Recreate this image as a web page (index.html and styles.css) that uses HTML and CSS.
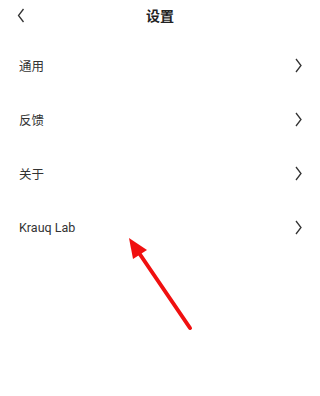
FILE: index.html
```html
<!DOCTYPE html>
<html>
<head>
<meta charset="utf-8">
<link rel="stylesheet" href="styles.css">
</head>
<body>
<div class="page">
  <div class="header">
    <svg class="back" width="8" height="15" viewBox="0 0 8 15"><path d="M6.5 1 L1.5 7.5 L6.5 14" fill="none" stroke="#333" stroke-width="1.3"/></svg>
    <div class="title">设置</div>
  </div>
  <div class="list">
    <div class="row"><span class="label">通用</span><svg class="chev" width="7" height="15" viewBox="0 0 7 15"><path d="M1 1 L6 7.5 L1 14" fill="none" stroke="#333" stroke-width="1.3"/></svg></div>
    <div class="row"><span class="label">反馈</span><svg class="chev" width="7" height="15" viewBox="0 0 7 15"><path d="M1 1 L6 7.5 L1 14" fill="none" stroke="#333" stroke-width="1.3"/></svg></div>
    <div class="row"><span class="label">关于</span><svg class="chev" width="7" height="15" viewBox="0 0 7 15"><path d="M1 1 L6 7.5 L1 14" fill="none" stroke="#333" stroke-width="1.3"/></svg></div>
    <div class="row"><span class="label">Krauq Lab</span><svg class="chev" width="7" height="15" viewBox="0 0 7 15"><path d="M1 1 L6 7.5 L1 14" fill="none" stroke="#333" stroke-width="1.3"/></svg></div>
  </div>
  <svg class="arrow" width="320" height="396" viewBox="0 0 320 396">
    <line x1="190" y1="328" x2="137" y2="250" stroke="#f01010" stroke-width="4" stroke-linecap="round"/>
    <polygon points="129,238 133,259 147,250" fill="#f01010"/>
  </svg>
</div>
</body>
</html>
```
FILE: styles.css
```css
html, body {
  margin: 0;
  padding: 0;
  background: #fff;
}
.page {
  position: relative;
  width: 320px;
  height: 396px;
  overflow: hidden;
  font-family: Roboto, "Noto Sans CJK SC", sans-serif;
  color: #333;
}
.header {
  position: relative;
  height: 30px;
  display: flex;
  align-items: center;
  justify-content: center;
  margin-bottom: 8px;
}
.back {
  position: absolute;
  left: 17px;
  top: 8px;
}
.title {
  font-size: 14px;
  font-weight: bold;
  color: #222;
}
.list {
  display: flex;
  flex-direction: column;
}
.row {
  height: 54px;
  display: flex;
  align-items: center;
  justify-content: space-between;
  padding: 0 18px 0 19px;
}
.label {
  font-size: 12.5px;
}
.chev {
  display: block;
}
.arrow {
  position: absolute;
  left: 0;
  top: 0;
}
```
